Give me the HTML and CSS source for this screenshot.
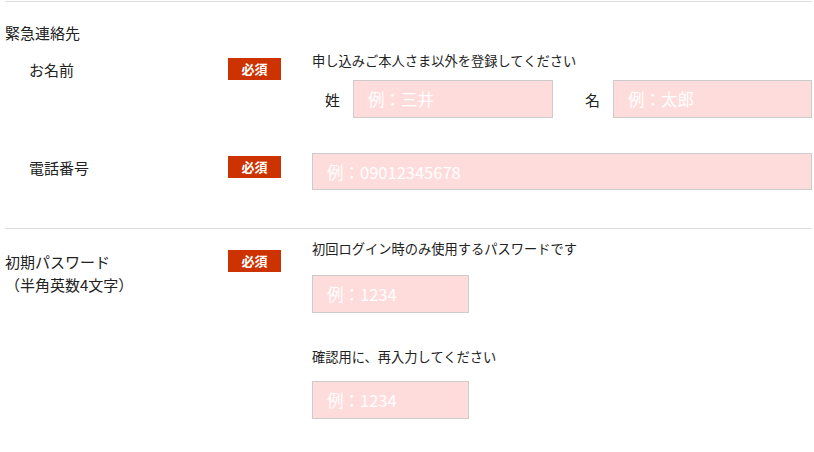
FILE: index.html
```html
<!DOCTYPE html>
<html lang="ja">
<head>
    <meta charset="UTF-8">
    <meta name="viewport" content="width=device-width, initial-scale=1.0">
    <title>緊急連絡先・初期パスワード</title>
    <link rel="stylesheet" href="styles.css">
</head>
<body>
    <div class="form">
        <!-- 緊急連絡先 -->
        <section class="group group-contact">
            <h2 class="group-title">緊急連絡先</h2>

            <div class="row row-name">
                <div class="row-label indent">お名前</div>
                <div class="row-badge"><span class="badge">必須</span></div>
                <div class="row-field">
                    <p class="note">申し込みご本人さま以外を登録してください</p>
                    <div class="name-inputs">
                        <span class="name-label first">姓</span>
                        <input class="text-input name-last" type="text" placeholder="例：三井">
                        <span class="name-label second">名</span>
                        <input class="text-input name-first" type="text" placeholder="例：太郎">
                    </div>
                </div>
            </div>

            <div class="row row-tel">
                <div class="row-label indent">電話番号</div>
                <div class="row-badge"><span class="badge">必須</span></div>
                <div class="row-field">
                    <input class="text-input tel-input" type="text" placeholder="例：09012345678">
                </div>
            </div>
        </section>

        <!-- 初期パスワード -->
        <section class="group group-password">
            <div class="row row-password">
                <div class="row-label">初期パスワード<br>（半角英数4文字）</div>
                <div class="row-badge"><span class="badge">必須</span></div>
                <div class="row-field">
                    <p class="note">初回ログイン時のみ使用するパスワードです</p>
                    <input class="text-input pass-input" type="text" placeholder="例：1234">
                    <p class="note note-confirm">確認用に、再入力してください</p>
                    <input class="text-input pass-input" type="text" placeholder="例：1234">
                </div>
            </div>
        </section>
    </div>
</body>
</html>
```

FILE: styles.css
```css
body {
    margin: 0;
    padding: 0;
    background-color: #fff;
    color: #222;
    font-family: "Noto Sans CJK JP", "Noto Sans", sans-serif;
}

.form {
    padding-top: 1px;
    margin-left: 5px;
    width: 807px;
}

.group {
    border-top: 1px solid #ddd;
}

.group-contact {
    padding: 20px 0 38px;
}

.group-password {
    padding: 11px 0 30px;
}

.group-title {
    margin: 0 0 8px;
    font-size: 15px;
    font-weight: normal;
    line-height: 22px;
}

.row {
    display: grid;
    grid-template-columns: 223px 84px 500px;
    align-items: start;
}

.row-label {
    font-size: 15px;
    line-height: 22px;
}

.row-label.indent {
    padding-left: 24px;
}

.badge {
    display: block;
    width: 53px;
    height: 22px;
    background-color: #cc3300;
    color: #fff;
    font-size: 13px;
    font-weight: bold;
    line-height: 22px;
    text-align: center;
}

.note {
    margin: 0;
    font-size: 13.25px;
    line-height: 18px;
}

.text-input {
    box-sizing: border-box;
    height: 38px;
    padding: 0 14px;
    border: 1px solid #ccc;
    border-radius: 0;
    background-color: #ffdcdc;
    font-family: inherit;
    font-size: 16.5px;
    outline: none;
}

.text-input::placeholder {
    color: #fff;
    opacity: 1;
}

/* お名前 */
.row-name .row-label {
    margin-top: 7px;
}

.row-name .row-badge {
    margin-top: 6px;
}

.row-name .note {
    margin-bottom: 10px;
}

.name-inputs {
    display: flex;
    align-items: center;
}

.name-label {
    font-size: 15px;
}

.name-label.first {
    margin: 0 13px;
}

.name-label.second {
    margin: 0 13px 0 32px;
}

.name-last {
    width: 200px;
}

.name-first {
    flex: 1;
    min-width: 0;
}

/* 電話番号 */
.row-tel {
    margin-top: 35px;
}

.row-tel .row-label {
    margin-top: 4px;
}

.row-tel .row-badge {
    margin-top: 3px;
}

.tel-input {
    display: block;
    width: 500px;
    height: 37px;
}

/* 初期パスワード */
.row-password .row-label {
    margin-top: 10px;
    line-height: 23px;
}

.row-password .row-badge {
    margin-top: 10px;
}

.row-password .note {
    margin-bottom: 17px;
}

.row-password .note-confirm {
    margin-top: 35px;
    margin-bottom: 15px;
}

.pass-input {
    display: block;
    width: 157px;
}
```
